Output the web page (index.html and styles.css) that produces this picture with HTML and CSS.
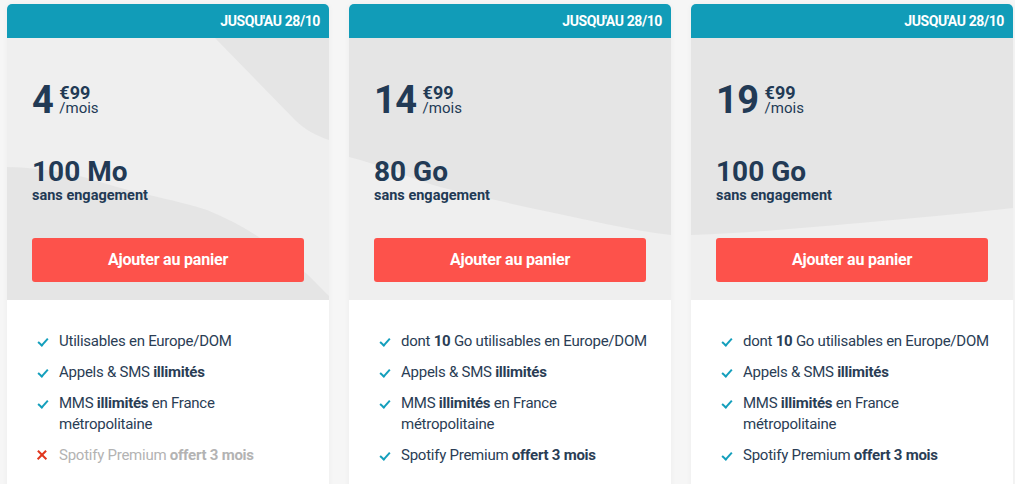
FILE: index.html
```html
<!DOCTYPE html>
<html lang="fr">
<head>
<meta charset="utf-8">
<title>Forfaits</title>
<link rel="stylesheet" href="styles.css">
</head>
<body>
<div class="offers">
  <section class="card">
    <div class="badge">JUSQU'AU 28/10</div>
    <div class="hero">
      <svg class="bg" viewBox="0 0 322 262" preserveAspectRatio="none" aria-hidden="true">
        <rect width="322" height="262" fill="#efefef"/>
        <path d="M208 0 L322 0 L322 102 C310 98 298 92 288 82 Z" fill="#e5e5e5"/>
        <path d="M0 129 C40 130 70 136 100 146 C140 158 170 162 200 172 C240 188 270 210 300 236 C310 246 316 252 322 258 L322 262 L0 262 Z" fill="#e5e5e5"/>
      </svg>
      <div class="price">
        <span class="amount">4</span>
        <span class="cents"><b>€99</b><span class="per">/mois</span></span>
      </div>
      <div class="data">100 Mo</div>
      <div class="commit">sans engagement</div>
      <button class="cta">Ajouter au panier</button>
    </div>
    <ul class="features">
      <li><span class="ico ok"></span><p>Utilisables en Europe/DOM</p></li>
      <li><span class="ico ok"></span><p>Appels &amp; SMS <strong>illimités</strong></p></li>
      <li><span class="ico ok"></span><p>MMS <strong>illimités</strong> en France<br>métropolitaine</p></li>
      <li class="off"><span class="ico no"></span><p>Spotify Premium <strong>offert 3 mois</strong></p></li>
    </ul>
  </section>

  <section class="card">
    <div class="badge">JUSQU'AU 28/10</div>
    <div class="hero">
      <svg class="bg" viewBox="0 0 322 262" preserveAspectRatio="none" aria-hidden="true">
        <rect width="322" height="262" fill="#efefef"/>
        <path d="M0 0 L322 0 L322 197 C280 192 240 182 191 172 C150 163 120 156 91 149 C60 140 30 126 0 119 Z" fill="#e5e5e5"/>
      </svg>
      <div class="price">
        <span class="amount">14</span>
        <span class="cents"><b>€99</b><span class="per">/mois</span></span>
      </div>
      <div class="data">80 Go</div>
      <div class="commit">sans engagement</div>
      <button class="cta">Ajouter au panier</button>
    </div>
    <ul class="features">
      <li><span class="ico ok"></span><p>dont <strong>10</strong> Go utilisables en Europe/DOM</p></li>
      <li><span class="ico ok"></span><p>Appels &amp; SMS <strong>illimités</strong></p></li>
      <li><span class="ico ok"></span><p>MMS <strong>illimités</strong> en France<br>métropolitaine</p></li>
      <li><span class="ico ok"></span><p>Spotify Premium <strong>offert 3 mois</strong></p></li>
    </ul>
  </section>

  <section class="card">
    <div class="badge">JUSQU'AU 28/10</div>
    <div class="hero">
      <svg class="bg" viewBox="0 0 322 262" preserveAspectRatio="none" aria-hidden="true">
        <rect width="322" height="262" fill="#efefef"/>
        <path d="M0 0 L322 0 L322 170 C270 176 220 180 169 185 C110 190 60 195 0 197 Z" fill="#e5e5e5"/>
      </svg>
      <div class="price">
        <span class="amount">19</span>
        <span class="cents"><b>€99</b><span class="per">/mois</span></span>
      </div>
      <div class="data">100 Go</div>
      <div class="commit">sans engagement</div>
      <button class="cta">Ajouter au panier</button>
    </div>
    <ul class="features">
      <li><span class="ico ok"></span><p>dont <strong>10</strong> Go utilisables en Europe/DOM</p></li>
      <li><span class="ico ok"></span><p>Appels &amp; SMS <strong>illimités</strong></p></li>
      <li><span class="ico ok"></span><p>MMS <strong>illimités</strong> en France<br>métropolitaine</p></li>
      <li><span class="ico ok"></span><p>Spotify Premium <strong>offert 3 mois</strong></p></li>
    </ul>
  </section>
</div>
</body>
</html>
```

FILE: styles.css
```css
* { box-sizing: border-box; }

html, body {
  margin: 0;
  padding: 0;
  background: #f6f6f6;
  font-family: Roboto, "Liberation Sans", Arial, sans-serif;
  color: #243b55;
  overflow: hidden;
}

.offers {
  display: flex;
  gap: 20px;
  padding: 4px 0 0 7px;
}

.card {
  width: 322px;
  flex: 0 0 322px;
  background: #ffffff;
  border-radius: 5px 5px 0 0;
  overflow: hidden;
  box-shadow: 0 0 6px rgba(0, 0, 0, 0.04);
  height: 500px;
}

.badge {
  height: 34px;
  background: #119cb8;
  color: #ffffff;
  font-weight: 700;
  font-size: 14px;
  letter-spacing: -0.4px;
  display: flex;
  align-items: center;
  justify-content: flex-end;
  padding: 0 9px 1px 0;
}

.hero {
  position: relative;
  height: 262px;
  padding: 44px 25px 0 25px;
  display: flex;
  flex-direction: column;
}

.hero .bg {
  position: absolute;
  inset: 0;
  width: 100%;
  height: 100%;
  z-index: 0;
}

.hero > *:not(.bg) {
  position: relative;
  z-index: 1;
}

.price {
  display: flex;
  align-items: flex-start;
  gap: 6px;
}

.amount {
  font-size: 38px;
  line-height: 37px;
  font-weight: 700;
  color: #223a55;
  letter-spacing: -0.5px;
}

.cents {
  display: flex;
  flex-direction: column;
  margin-top: 3px;
}

.cents b {
  font-size: 18px;
  line-height: 16px;
  font-weight: 700;
  color: #223a55;
}

.per {
  font-size: 15px;
  line-height: 14px;
  color: #223a55;
}

.data {
  margin-top: 38px;
  font-size: 28px;
  line-height: 30px;
  font-weight: 700;
  color: #223a55;
  letter-spacing: 0;
}

.commit {
  font-size: 14.5px;
  line-height: 18px;
  font-weight: 700;
  color: #223a55;
}

.cta {
  margin-top: 33px;
  height: 44px;
  width: 100%;
  border: 0;
  border-radius: 3px;
  background: #fd524b;
  color: #ffffff;
  font-family: inherit;
  font-weight: 700;
  font-size: 16px;
  letter-spacing: -0.2px;
  padding: 0 0 2px 0;
}

.features {
  list-style: none;
  margin: 0;
  padding: 31px 10px 0 30px;
  display: flex;
  flex-direction: column;
  gap: 10px;
}

.features li {
  display: flex;
  align-items: flex-start;
  gap: 12px;
  font-size: 15px;
  line-height: 21px;
  color: #2a3d55;
  letter-spacing: -0.25px;
}

.features p {
  margin: 0;
  flex: 1 1 auto;
}

.features strong { font-weight: 700; }

.features li.off { color: #b3b3b3; }

.ico {
  flex: 0 0 10px;
  width: 10px;
  height: 21px;
  position: relative;
}

.ico.ok::after {
  content: "";
  position: absolute;
  left: 3px;
  top: 5px;
  width: 4px;
  height: 8px;
  border-right: 2px solid #149fbc;
  border-bottom: 2px solid #149fbc;
  transform: rotate(42deg);
  transform-origin: center;
}

.ico.no::before,
.ico.no::after {
  content: "";
  position: absolute;
  left: -1px;
  top: 9px;
  width: 12px;
  height: 2.4px;
  background: #e1361d;
}
.ico.no::before { transform: rotate(45deg); }
.ico.no::after { transform: rotate(-45deg); }
```
